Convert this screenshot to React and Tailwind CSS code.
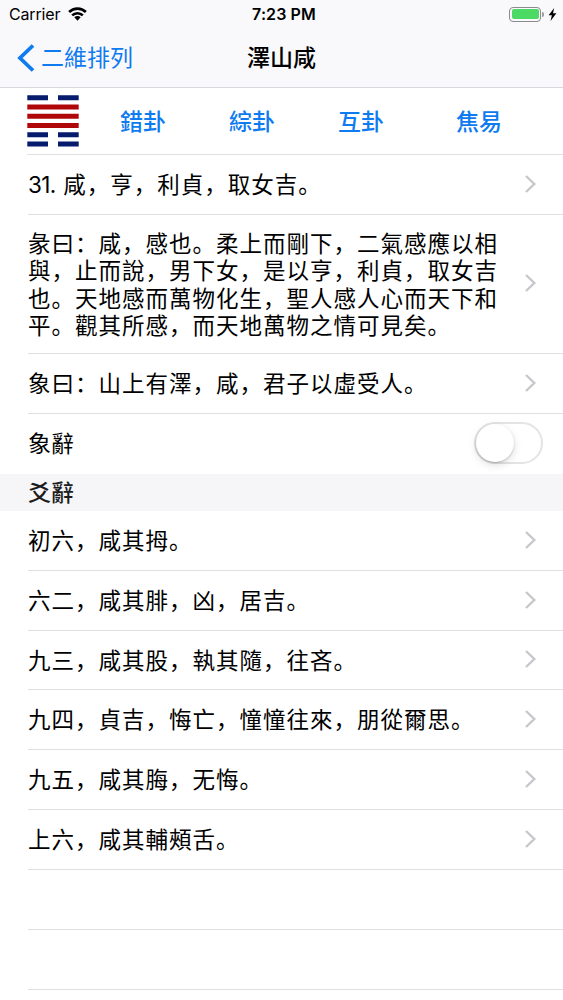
import clsx from 'clsx'

const judgments = [
  { number: '31.', text: '咸，亨，利貞，取女吉。', height: 'h-[60px]' },
  {
    text: '彖曰：咸，感也。柔上而剛下，二氣感應以相與，止而說，男下女，是以亨，利貞，取女吉也。天地感而萬物化生，聖人感人心而天下和平。觀其所感，而天地萬物之情可見矣。',
    height: 'h-[139px]',
  },
  { text: '象曰：山上有澤，咸，君子以虛受人。', height: 'h-[60px]' },
]

const lines = [
  { text: '初六，咸其拇。', height: 'h-[60px]' },
  { text: '六二，咸其腓，凶，居吉。', height: 'h-[60px]' },
  { text: '九三，咸其股，執其隨，往吝。', height: 'h-[59px]' },
  { text: '九四，貞吉，悔亡，憧憧往來，朋從爾思。', height: 'h-[60px]' },
  { text: '九五，咸其脢，无悔。', height: 'h-[60px]' },
  { text: '上六，咸其輔頰舌。', height: 'h-[60px]' },
]

// top to bottom, true = unbroken line
const hexagram = [false, true, true, true, false, false]

function StatusBar() {
  return (
    <div className="grid h-[28px] grid-cols-3 items-center pl-[9px] pr-[6px] text-[16px]">
      <div className="flex items-center gap-[8px]">
        <span className="tracking-[-0.15px]">Carrier</span>
        <svg viewBox="0 0 20 15" className="h-[14px] w-[19px]" fill="none" stroke="black" strokeWidth="2.8">
          <path d="M1 5.4a12.8 12.8 0 0 1 18 0" />
          <path d="M4.3 9a8.1 8.1 0 0 1 11.4 0" />
          <path d="M10 14.6 6.6 11.1a4.8 4.8 0 0 1 6.8 0Z" fill="black" stroke="none" />
        </svg>
      </div>
      <span className="pl-[2px] text-center font-semibold tracking-[0.1px]">7:23 PM</span>
      <div className="flex items-center justify-end">
        <div className="h-[15px] w-[32px] rounded-[4px] border border-[#8b8b8b] p-[1.5px]">
          <div className="h-full rounded-[2px] bg-[#4cd964]" />
        </div>
        <div className="ml-px h-[5px] w-[2px] rounded-r-full bg-[#9a9a9a]" />
        <svg viewBox="0 0 9 14" className="ml-[4px] h-[13px] w-[9px]">
          <path d="M6.3 0 0.3 7.8h3.5L2.4 14 8.7 5.7H5.1Z" />
        </svg>
      </div>
    </div>
  )
}

function NavBar() {
  return (
    <div className="grid h-[59px] grid-cols-[1fr_auto_1fr] items-center text-[23px]">
      <a className="flex items-center pl-[17px] text-[#0f7bf0]">
        <svg viewBox="0 0 18 28" className="h-[28px] w-[18px]" fill="none" stroke="currentColor" strokeWidth="3.8">
          <path d="M16 1.5 3 14l13 12.5" />
        </svg>
        <span className="ml-[6px] pt-[2px]">二維排列</span>
      </a>
      <h1 className="pt-[2px] font-medium">澤山咸</h1>
    </div>
  )
}

function Hexagram() {
  return (
    <svg viewBox="0 0 52 52" className="size-[52px]">
      {hexagram.map((solid, i) => (
        <path
          key={i}
          d={solid ? 'M0.3 0H51.7' : 'M0.3 0H21M31 0H51.7'}
          transform={`translate(0 ${2.7 + i * 9.25})`}
          stroke={solid ? '#b00808' : '#061b6b'}
          strokeWidth="5"
        />
      ))}
    </svg>
  )
}

function Row({ number, text, height }) {
  return (
    <li className={clsx('ml-[28px] flex items-center border-b border-[#e0e0e2]', height)}>
      <span className="w-[474px] pt-px text-[22.5px] leading-[27.5px] tracking-[1px]">
        {number && <span className="mr-[7.5px] tracking-[-0.6px]">{number}</span>}
        {text}
      </span>
      <svg viewBox="0 0 12 18" className="mb-[2px] ml-[23px] h-[18px] w-[12px]" fill="none" stroke="#c7c7cc" strokeWidth="2.4">
        <path d="M1 1l8.3 8L1 17" />
      </svg>
    </li>
  )
}

export default function App() {
  return (
    <div className="h-[1000px] w-[563px] overflow-hidden bg-white font-[Inter,'Noto_Sans_CJK_SC',sans-serif] text-[23px] text-black">
      <header className="h-[88px] border-b border-[#d9d8dc] bg-[#f9f8fb]">
        <StatusBar />
        <NavBar />
      </header>
      <div className="ml-[27px] flex h-[67px] items-center border-b border-[#e0e0e2]">
        <Hexagram />
        <div className="ml-[41px] flex pt-[2px] font-medium text-[#0f7bf0]">
          <button className="w-[109px] text-left">錯卦</button>
          <button className="w-[109px] text-left">綜卦</button>
          <button className="w-[118px] text-left">互卦</button>
          <button className="text-left">焦易</button>
        </div>
      </div>
      <ul>
        {judgments.map((row) => (
          <Row key={row.text} {...row} />
        ))}
      </ul>
      <div className="flex h-[60px] items-center justify-between pl-[28px] pr-[20px]">
        <span>象辭</span>
        <button className="mb-[2px] h-[42px] w-[69px] rounded-full border-2 border-[#e4e3e6]">
          <div className="size-[38px] rounded-full bg-white shadow-[0_3px_8px_rgba(0,0,0,0.13),0_1px_2px_rgba(0,0,0,0.2)]" />
        </button>
      </div>
      <h2 className="flex h-[37px] items-center bg-[#f6f5f8] pl-[28px] pt-[2px] font-medium text-[#1c1c1e]">爻辭</h2>
      <ul>
        {lines.map((row) => (
          <Row key={row.text} {...row} />
        ))}
      </ul>
      <div className="ml-[28px] h-[60px] border-b border-[#e0e0e2]" />
      <div className="ml-[28px] h-[60px] border-b border-[#e0e0e2]" />
    </div>
  )
}
